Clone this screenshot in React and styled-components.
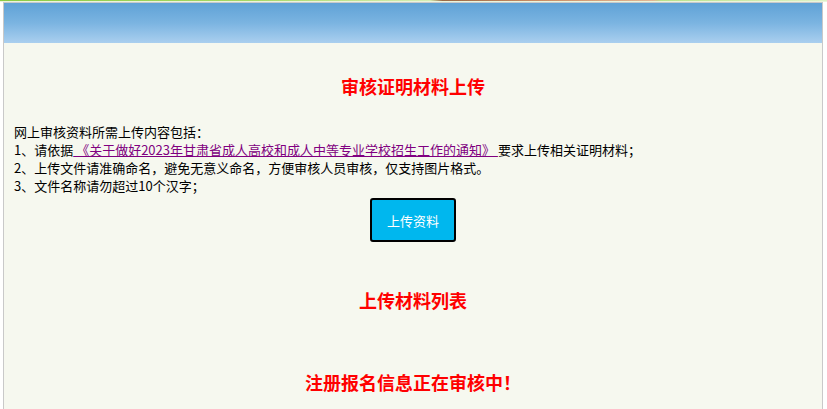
import React from 'react';
import styled, { createGlobalStyle } from 'styled-components';

const GlobalStyle = createGlobalStyle`
    html, body {
        margin: 0;
        padding: 0;
        background: #ffffff;
    }
    body {
        font-family: "Microsoft YaHei", "Noto Sans CJK SC", sans-serif;
        font-size: 13px;
        color: #000;
    }
`;

function App() {
    return (
        <>
            <GlobalStyle />
            <Banner />
            <Panel>
                <Header />
                <Content>
                    <Heading>审核证明材料上传</Heading>
                    <Notes>
                        <p>网上审核资料所需上传内容包括：</p>
                        <p>
                            1、请依据
                            <NoticeLink href="#notice"> 《关于做好2023年甘肃省成人高校和成人中等专业学校招生工作的通知》 </NoticeLink>
                            要求上传相关证明材料；
                        </p>
                        <p>2、上传文件请准确命名，避免无意义命名，方便审核人员审核，仅支持图片格式。</p>
                        <p>3、文件名称请勿超过10个汉字；</p>
                    </Notes>
                    <Actions>
                        <UploadButton type="button">上传资料</UploadButton>
                    </Actions>
                    <Heading $gap={46}>上传材料列表</Heading>
                    <Heading $gap={58}>注册报名信息正在审核中！</Heading>
                </Content>
            </Panel>
        </>
    );
}

export default App;

const Banner = styled.div`
    height: 2px;
    background:
        linear-gradient(to bottom, transparent 50%, #eaf5dc 50%),
        linear-gradient(to right, #8ccb45 0%, #a6d765 30%, #d6eeb5 52%, #9a6a45 53.5%, #c98d63 65%, #e2b793 79%, #b9e28c 80%, #dff2c8 100%);
`;

const Panel = styled.div`
    margin: 0 4px 0 3px;
    border: 1px solid #c9c9c9;
    border-bottom: none;
    background: #f6f8ef;
    min-height: 406px;
`;

const Header = styled.div`
    height: 40px;
    background: linear-gradient(to bottom, #5fa2d6 0%, #7bb4e1 50%, #aacfef 100%);
`;

const Content = styled.div`
    padding: 31px 10px 20px;
`;

const Heading = styled.h2`
    margin: ${(p) => p.$gap || 0}px 0 0;
    font-size: 18px;
    line-height: 24px;
    font-weight: bold;
    color: #ff0000;
    text-align: center;
`;

const Notes = styled.div`
    margin-top: 25px;
    line-height: 18px;

    p {
        margin: 0;
    }
`;

const NoticeLink = styled.a`
    color: #800080;
    text-decoration: underline;
    white-space: pre;
`;

const Actions = styled.div`
    display: flex;
    justify-content: center;
    margin-top: 3px;
`;

const UploadButton = styled.button`
    width: 86px;
    height: 44px;
    padding: 0;
    border: 2px solid #000;
    border-radius: 3px;
    background: #00b7ee;
    color: #fff;
    font-family: "Microsoft YaHei", "Noto Sans CJK SC", sans-serif;
    font-size: 13px;
    cursor: pointer;
`;
